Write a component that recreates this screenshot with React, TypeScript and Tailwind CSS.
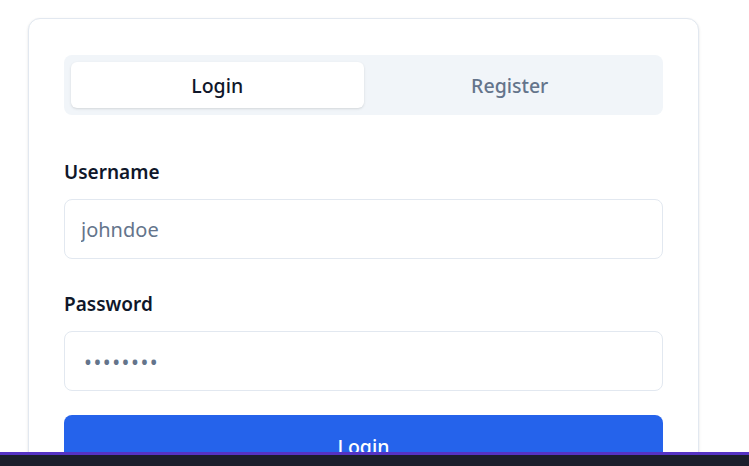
import { useState } from 'react';

export default function App() {
  const [tab, setTab] = useState<'login' | 'register'>('login');

  return (
    <div className="min-h-screen bg-white font-['Noto_Sans',sans-serif]">
      <div className="pl-[28px] pt-[18px] w-[699px]">
        <div className="rounded-[12px] border border-[#e2e8f0] bg-white shadow-sm px-[35px] pt-[36px] pb-[36px]">
          {/* Tabs */}
          <div className="grid grid-cols-2 h-[60px] rounded-[8px] bg-[#f1f5f9] p-[7px]">
            <button
              onClick={() => setTab('login')}
              className={`rounded-[6px] pt-[2px] text-[19.5px] leading-[44px] font-medium ${
                tab === 'login' ? 'bg-white text-[#0f172a] shadow-sm' : 'text-[#64748b]'
              }`}
            >
              Login
            </button>
            <button
              onClick={() => setTab('register')}
              className={`rounded-[6px] pt-[2px] text-[19.5px] leading-[44px] font-medium ${
                tab === 'register' ? 'bg-white text-[#0f172a] shadow-sm' : 'text-[#64748b]'
              }`}
            >
              Register
            </button>
          </div>

          {/* Form */}
          <div className="mt-[45px] flex flex-col">
            <label className="text-[19px] leading-[24px] font-semibold text-[#0f172a]">Username</label>
            <input
              className="mt-[15px] h-[60px] rounded-[8px] border border-[#e2e8f0] px-[16px] text-[20px] placeholder:text-[#64748b] outline-none"
              placeholder="johndoe"
            />
            <label className="mt-[33px] text-[19px] leading-[24px] font-semibold text-[#0f172a]">Password</label>
            <input
              type="password"
              className="mt-[15px] h-[60px] rounded-[8px] border border-[#e2e8f0] pl-[19px] pr-[16px] pt-[2px] text-[21px] tracking-[1.5px] placeholder:text-[#64748b] outline-none"
              placeholder="••••••••"
            />
            <button className="mt-[24px] h-[60px] rounded-[8px] bg-[#2563eb] pt-[3px] text-[19.5px] font-medium text-white">
              Login
            </button>
          </div>
        </div>
      </div>

      {/* bottom bar */}
      <div className="fixed bottom-0 left-0 right-0 h-[14px] border-t-[3px] border-[#5533c4] bg-[#1b1f2c]" />
    </div>
  );
}
